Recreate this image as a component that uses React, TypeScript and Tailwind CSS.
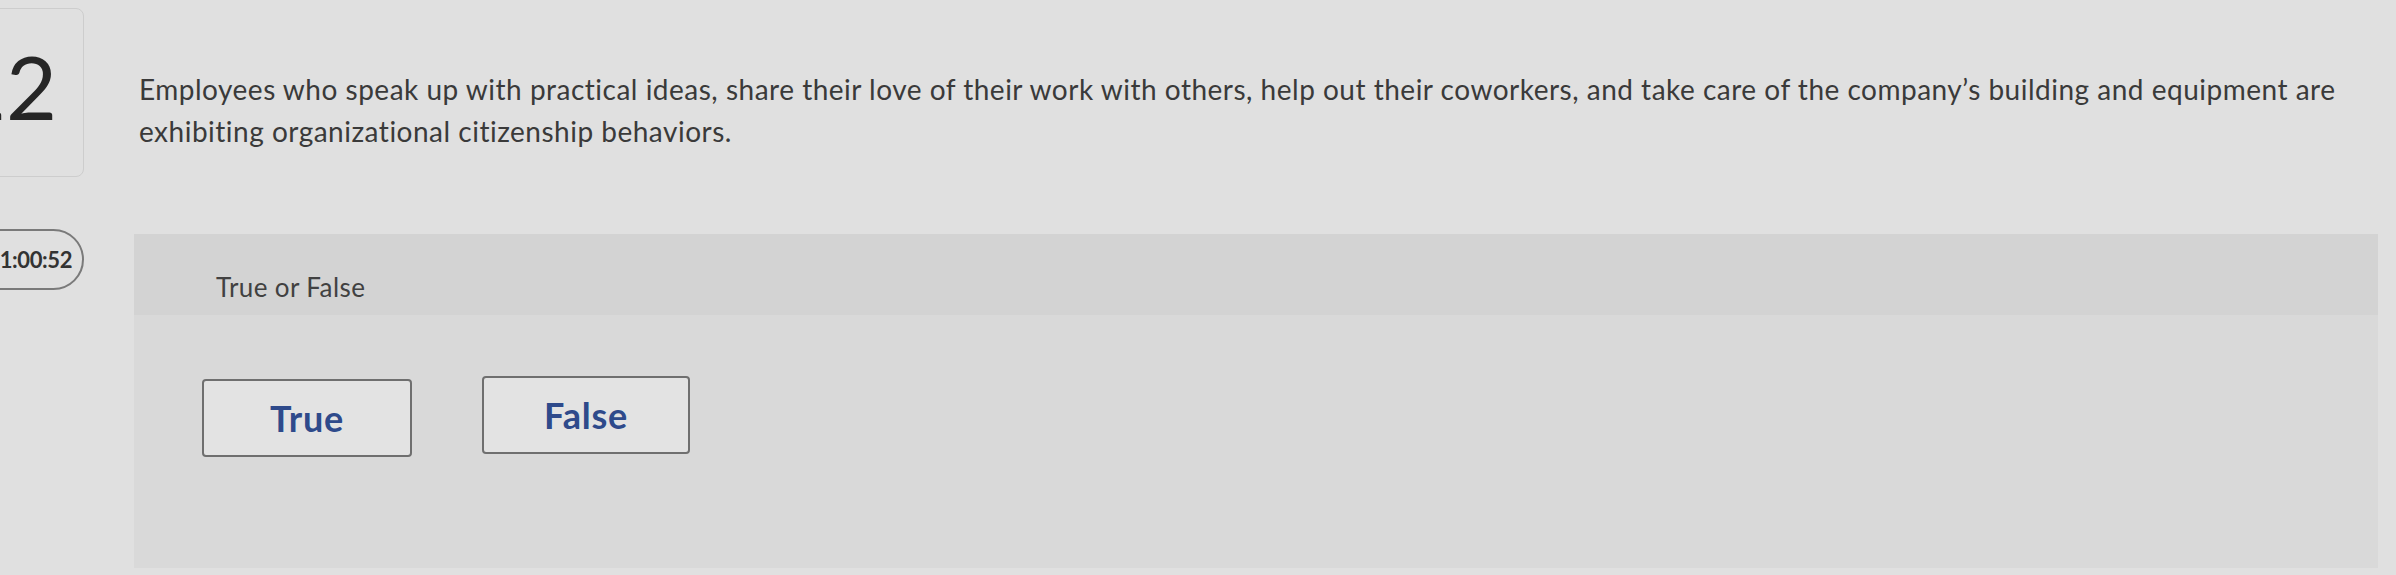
export default function App() {
  return (
    <div
      className="flex w-[2396px] h-[575px] overflow-hidden bg-[#e0e0e0] text-[#3b3b3b]"
      style={{ fontFamily: 'Lato, "Open Sans", sans-serif' }}
    >
      {/* left rail: question number and timer */}
      <div className="w-[84px] shrink-0 flex flex-col items-end">
        <div className="mt-[8px] w-[140px] h-[169px] shrink-0 flex items-center justify-end pr-[26px] rounded-[8px] border border-[#cdcdcd]">
          <span className="text-[88px] font-normal leading-none text-[#262626] -mt-[14px]">22</span>
        </div>
        <div className="mt-[52px] w-[140px] h-[61px] shrink-0 flex items-center justify-end pr-[10px] rounded-full border-2 border-[#7a7a7a]">
          <span className="text-[22px] font-bold tracking-[-0.4px] text-[#333]">01:00:52</span>
        </div>
      </div>

      {/* main */}
      <div className="ml-[50px] flex-1 pr-[18px] flex flex-col">
        <p className="mt-[68px] ml-[5px] max-w-[2215px] text-[28px] leading-[42px] tracking-[0.5px] text-[#3a3a3a]">
          Employees who speak up with practical ideas, share their love of their work with others, help out their coworkers, and take care of the company’s building and equipment are exhibiting organizational citizenship behaviors.
        </p>

        <div className="mt-[82px] flex-1 mb-[7px] bg-[#d9d9d9] flex flex-col">
          <div className="h-[81px] shrink-0 bg-[#d3d3d3] flex items-center pl-[82px] pt-[26px]">
            <span className="text-[26px] tracking-[0.4px] text-[#414141]">True or False</span>
          </div>
          <div className="flex gap-[70px] pl-[68px] pt-[64px]">
            <button className="w-[210px] h-[78px] rounded-[4px] border-2 border-[#6f6f6f] bg-[#e3e3e3] text-[36px] font-bold tracking-[0.8px] text-[#2e4a8b]">
              True
            </button>
            <button className="w-[208px] h-[78px] -mt-[3px] rounded-[4px] border-2 border-[#6f6f6f] bg-[#e3e3e3] text-[36px] font-bold tracking-[0.8px] text-[#2e4a8b]">
              False
            </button>
          </div>
        </div>
      </div>
    </div>
  );
}
